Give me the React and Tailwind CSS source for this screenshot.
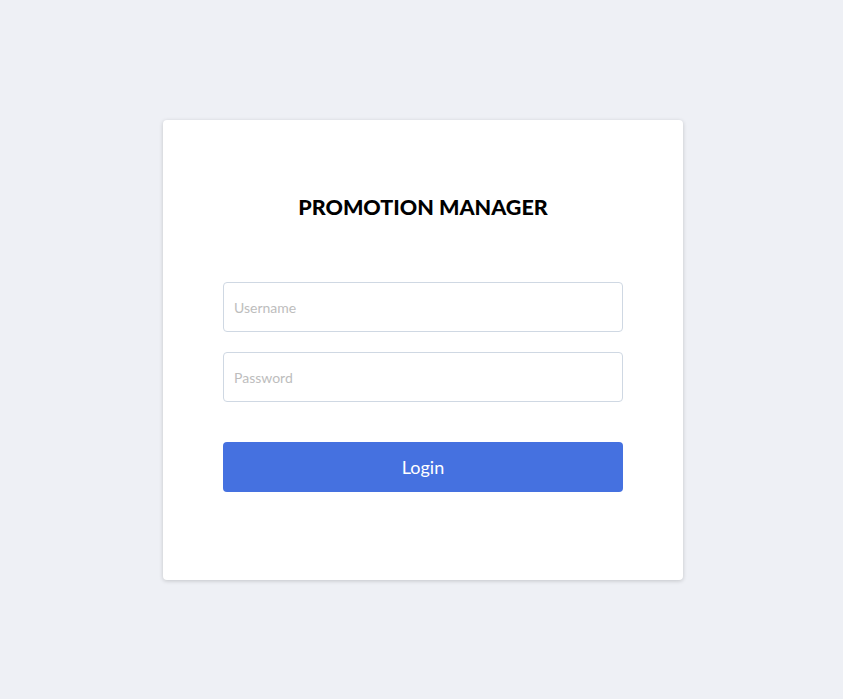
export default function App() {
    return (
        <div className="min-h-screen w-full bg-[#eef0f5] flex justify-center pt-[120px] pl-[3px]" style={{ fontFamily: '"Lato", "Noto Sans", sans-serif' }}>
            <div className="w-[520px] h-[460px] bg-white rounded-[4px] shadow-[0_1px_4px_rgba(0,0,0,0.18)] px-[60px] pt-[71px] flex flex-col">
                <h1 className="text-center text-[21.5px] leading-[33px] font-black text-black">PROMOTION MANAGER</h1>
                <div className="mt-[58px] flex flex-col gap-5">
                    <input
                        type="text"
                        placeholder="Username"
                        className="h-[50px] w-full border border-[#cfd8e3] rounded-[4px] px-[10px] text-[14px] text-gray-700 placeholder:text-[#bdbdbd] outline-none"
                    />
                    <input
                        type="password"
                        placeholder="Password"
                        className="h-[50px] w-full border border-[#cfd8e3] rounded-[4px] px-[10px] text-[14px] text-gray-700 placeholder:text-[#bdbdbd] outline-none"
                    />
                </div>
                <button className="mt-10 h-[50px] w-full bg-[#4571e0] rounded-[4px] text-white text-[18px]">Login</button>
            </div>
        </div>
    );
}
